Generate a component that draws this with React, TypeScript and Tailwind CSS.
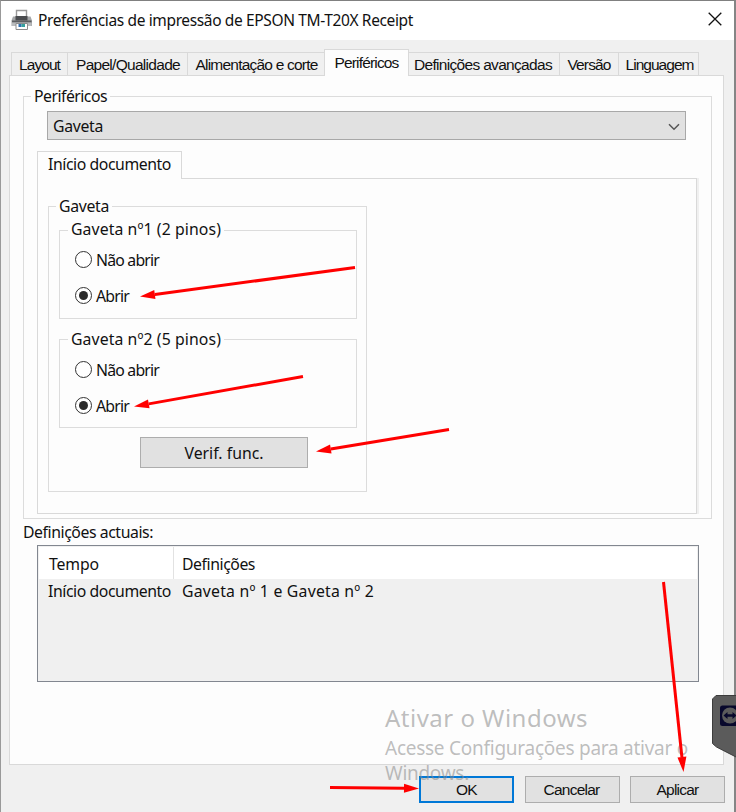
import { useLayoutEffect, useRef, type ReactNode } from "react";

const TAHOMA = "font-['Noto_Sans','Open_Sans',sans-serif] text-[15.8px]";
const SEGOE = "font-['Noto_Sans','Open_Sans',sans-serif]";
const SANS = "font-['Liberation_Sans',sans-serif] text-[15.5px]";

/* Text whose tracking is adjusted so that it spans the given width. */
function Fit({ w, children, className = "" }: { w: number; children: string; className?: string }) {
  const ref = useRef<HTMLSpanElement>(null);
  useLayoutEffect(() => {
    const el = ref.current;
    if (!el) return;
    el.style.letterSpacing = "0px";
    const natural = el.getBoundingClientRect().width;
    el.style.letterSpacing = `${(w - natural) / children.length}px`;
  }, [w, children]);
  return (
    <span ref={ref} className={`inline-block whitespace-pre ${className}`}>
      {children}
    </span>
  );
}

function Tab({ label, w, className }: { label: string; w: number; className: string }) {
  return (
    <div className={`flex h-[23px] items-center justify-center border-t border-[#d9d9d9] bg-[#f0f0f0] pt-[2px] ${className}`}>
      <Fit w={w}>{label}</Fit>
    </div>
  );
}

function Group({ label, w, className, legend, children }: { label: string; w: number; className: string; legend: string; children: ReactNode }) {
  return (
    <fieldset className={`border border-[#dcdcdc] ${className}`}>
      <legend className={`h-5 pr-[3px] pl-[3px] ${legend}`}>
        <Fit w={w}>{label}</Fit>
      </legend>
      {children}
    </fieldset>
  );
}

function Radio({ label, w, checked = false }: { label: string; w: number; checked?: boolean }) {
  return (
    <div className="flex h-5 items-center gap-1 leading-5">
      <span className="flex size-[17px] items-center justify-center rounded-full border-[1.5px] border-[#333] bg-white">
        {checked && <span className="size-[9px] rounded-full bg-[#2b2b2b]" />}
      </span>
      <Fit w={w} className="pt-[2px]">{label}</Fit>
    </div>
  );
}

function Drawer({ label, className, legend, body }: { label: string; className: string; legend: string; body: string }) {
  return (
    <Group label={label} w={150} className={`ml-[10px] h-[99px] w-[298px] ${className}`} legend={`ml-[8px] ${legend}`}>
      <div className={`flex flex-col gap-4 pl-[15px] ${body}`}>
        <Radio label="Não abrir" w={63} />
        <Radio label="Abrir" w={33} checked />
      </div>
    </Group>
  );
}

function Arrow({ x1, y1, x2, y2 }: { x1: number; y1: number; x2: number; y2: number }) {
  const len = Math.hypot(x2 - x1, y2 - y1);
  const ux = (x2 - x1) / len;
  const uy = (y2 - y1) / len;
  const bx = x2 - ux * 15;
  const by = y2 - uy * 15;
  return (
    <g>
      <line x1={x1} y1={y1} x2={bx} y2={by} stroke="#ff0000" strokeWidth="3" />
      <polygon points={`${x2},${y2} ${bx - uy * 4.5},${by + ux * 4.5} ${bx + uy * 4.5},${by - ux * 4.5}`} fill="#ff0000" />
    </g>
  );
}

function PrinterIcon() {
  return (
    <svg className="-mt-[2px]" width="22" height="22" viewBox="0 0 22 22">
      <path d="M5.500 8V1.500h10V8" fill="#fff" stroke="#999" strokeWidth="1.400" />
      <path d="M2 7.500h17.500l1.500 4v5.500H0.500v-5.500z" fill="#a4a6a8" />
      <path d="M4.500 7h12v4.500h-12z" fill="#4a4c4f" />
      <path d="M1 11.500h19.500v2H1z" fill="#5c5e61" />
      <path d="M1 13.500h19.500V17H1z" fill="#b9bbbd" />
      <path d="M5 14.500h11.500V20.500H5z" fill="#fff" stroke="#8c8c8c" />
      <path d="M7.500 15h3v3h-3z" fill="#2f6fb0" />
      <path d="M10.500 15h3.500v3h-3.500z" fill="#35a19c" />
    </svg>
  );
}

function RemoteBadge() {
  return (
    <svg className="absolute top-[694px] left-[711px]" width="25" height="64" viewBox="0 0 25 64">
      <path d="M26 1.500H5L1.500 5v44.500L5.500 53 26 63.500z" fill="#5b5b5b" stroke="#3c3c3c" />
      <rect x="9" y="11.500" width="22" height="20.500" rx="2.500" fill="#08082c" />
      <circle cx="19" cy="21.500" r="8" fill="#5b5b5b" />
      <path d="M12.500 21.500l4-3.500v2.300h5v-2.300l4 3.500-4 3.500v-2.300h-5v2.300z" fill="#08082c" />
    </svg>
  );
}

export default function App() {
  return (
    <div className={`relative h-[812px] w-[736px] overflow-hidden text-[#111] ${TAHOMA}`}>
      <div className="h-full border-t border-r-2 border-l border-t-[#808080] border-r-[#858585] border-l-[#999] bg-[#f0f0f0]">
        <header className={`flex h-[39px] items-center bg-white pl-[10px] ${SEGOE}`}>
          <PrinterIcon />
          <h1 className="-mt-px ml-[5px] text-[15.5px] leading-5">
            <Fit w={375}>Preferências de impressão de EPSON TM-T20X Receipt</Fit>
          </h1>
          <svg className="-mt-[3px] mr-3 ml-auto" width="14" height="14" viewBox="0 0 14 14">
            <path d="M.7.7l12.600 12.600M13.300.7L.7 13.300" stroke="#111" strokeWidth="1.300" />
          </svg>
        </header>

        <nav className={`mt-[9px] flex h-[26px] items-end pl-[10px] leading-5 ${SANS}`}>
          <Tab label="Layout" w={41} className="w-[56px] border-l" />
          <Tab label="Papel/Qualidade" w={104} className="w-[120px] border-l pl-px" />
          <Tab label="Alimentação e corte" w={122} className="w-[137px] border-l pl-px" />
          <div className="relative -mb-px flex h-[27px] w-[85px] items-center justify-center border-x border-t border-[#d9d9d9] bg-[#fdfdfd]">
            <Fit w={64}>Periféricos</Fit>
          </div>
          <Tab label="Definições avançadas" w={138} className="w-[150px] pr-[2px]" />
          <Tab label="Versão" w={43} className="w-[59px] border-l" />
          <Tab label="Linguagem" w={68} className="w-[81px] border-x pl-[2px]" />
        </nav>

        <main className="ml-2 h-[690px] w-[715px] border border-[#d9d9d9] bg-[#fdfdfd]">
          <Group label="Periféricos" w={73} className="mt-[10px] ml-[13px] h-[433px] w-[689px]" legend="ml-[7px] leading-5">
            <div className="mt-[5px] ml-[23px] flex h-[29px] w-[639px] items-center justify-between border border-[#a8a8a8] bg-[#e1e1e1] pr-[5px] pl-[5px]">
              <Fit w={50} className="pt-[2px]">Gaveta</Fit>
              <svg className="mt-[2px]" width="12" height="8" viewBox="0 0 12 8">
                <path d="M1 1.200l5 5 5-5" fill="none" stroke="#555" strokeWidth="1.500" />
              </svg>
            </div>
            <div className="relative mt-[11px] -mb-px ml-[13px] flex h-[28px] w-[145px] items-center border-x border-t border-[#d9d9d9] bg-[#fdfdfd] pb-[2px] pl-[10px]">
              <Fit w={123}>Início documento</Fit>
            </div>
            <section className="ml-[13px] h-[336px] w-[660px] border border-[#d9d9d9] shadow-[2px_0_0_#f0f0f0]">
              <Group label="Gaveta" w={50} className="mt-[17px] ml-[10px] h-[296px] w-[319px]" legend="ml-[7px] leading-5">
                <Drawer label="Gaveta nº1 (2 pinos)" className="mt-1" legend="leading-[18px]" body="pt-[9px]" />
                <Drawer label="Gaveta nº2 (5 pinos)" className="mt-[10px]" legend="leading-5" body="pt-[10px]" />
                <button className="mt-[9px] ml-[91px] flex h-[31px] w-[168px] items-center justify-center border border-[#adadad] bg-[#e1e1e1] pt-[2px]">
                  <Fit w={79}>Verif. func.</Fit>
                </button>
              </Group>
            </section>
          </Group>

          <p className="mt-[3px] ml-[13px] h-5 leading-5">
            <Fit w={130}>Definições actuais:</Fit>
          </p>
          <section className="mt-[3px] ml-[27px] h-[137px] w-[662px] border border-[#828790] bg-[#f0f0f0] p-px">
            <div className="flex h-8 items-center bg-white pl-[10px]">
              <div className="flex h-full w-[125px] items-center border-r border-[#e2e2e2] pt-[3px]">
                <Fit w={50}>Tempo</Fit>
              </div>
              <Fit w={73} className="ml-2 pt-[3px]">Definições</Fit>
            </div>
            <div className="flex h-[25px] items-center pl-[9px]">
              <Fit w={123} className="mr-[11px]">Início documento</Fit>
              <Fit w={192}>Gaveta nº 1 e Gaveta nº 2</Fit>
            </div>
          </section>
        </main>

        <footer className={`mt-[11px] ml-[418px] flex gap-[11px] leading-4 ${SANS}`}>
          <button className="flex h-[27px] w-[95px] items-center justify-center border-2 border-[#0078d7] bg-[#e1e1e1]">
            <Fit w={21}>OK</Fit>
          </button>
          <button className="flex h-[27px] w-[95px] items-center justify-center border border-[#adadad] bg-[#e1e1e1] pr-[2px]">
            <Fit w={56}>Cancelar</Fit>
          </button>
          <button className="-ml-px flex h-[27px] w-[95px] items-center justify-center border border-[#adadad] bg-[#e1e1e1]">
            <Fit w={42}>Aplicar</Fit>
          </button>
        </footer>
      </div>

      <div className={`pointer-events-none absolute top-[702px] left-[385px] text-[#888]/55 ${SEGOE}`}>
        <p className="h-[32px] text-[24px] leading-8">
          <Fit w={203}>Ativar o Windows</Fit>
        </p>
        <p className="h-[26px] text-[19px] leading-[28px]">
          <Fit w={303}>Acesse Configurações para ativar o</Fit>
        </p>
        <p className="mt-[5px] h-4 text-[19px] leading-4">
          <Fit w={84}>Windows.</Fit>
        </p>
      </div>

      <RemoteBadge />

      <svg className="pointer-events-none absolute inset-0" width="736" height="812" viewBox="0 0 736 812">
        <Arrow x1={355} y1={267.500} x2={140} y2={296.500} />
        <Arrow x1={303} y1={376.500} x2={134} y2={406.500} />
        <Arrow x1={449} y1={429.500} x2={316} y2={451.500} />
        <Arrow x1={663.500} y1={582} x2={683.500} y2={772} />
        <Arrow x1={330} y1={787.500} x2={419} y2={788.500} />
      </svg>
    </div>
  );
}
